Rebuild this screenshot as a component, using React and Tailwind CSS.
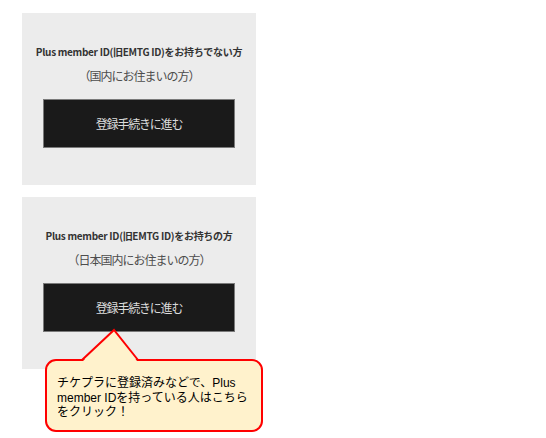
import React from 'react';

const jp = { fontFamily: '"Noto Sans CJK JP", "Noto Sans", sans-serif' };

const RegisterCard = ({ title, note }) => (
    <div className="w-[234px] h-[172px] bg-[#ececec] flex flex-col items-center pt-[31px]" style={jp}>
        <p className="text-[10px] leading-[16px] font-bold text-[#333] tracking-[-0.3px]">{title}</p>
        <p className="mt-[7px] text-[12px] leading-[18px] text-[#4d4d4d] tracking-[-1px]">{note}</p>
        <button className="mt-[14px] w-[192px] h-[49px] bg-[#1a1a1a] border border-[#7a7a7a] text-[#dcdcdc] text-[12px] tracking-[-1.2px]">
            登録手続きに進む
        </button>
    </div>
);

export default function App() {
    return (
        <div className="relative w-[546px] h-[438px] bg-white overflow-hidden">
            <div className="flex flex-col gap-[12px] pl-[22px] pt-[13px]">
                <RegisterCard title="Plus member ID(旧EMTG ID)をお持ちでない方" note="（国内にお住まいの方）" />
                <RegisterCard title="Plus member ID(旧EMTG ID)をお持ちの方" note="（日本国内にお住まいの方）" />
            </div>

            {/* callout */}
            <div
                className="absolute left-[45px] top-[359px] w-[218px] h-[73px] bg-[#fff2cc] border-2 border-[#ff0000] rounded-[11px] pl-[10px] pt-[15px] text-[12px] leading-[14.5px] text-black"
                style={{ fontFamily: '"Liberation Sans", "Noto Sans CJK JP", sans-serif' }}
            >
                チケプラに登録済みなどで、Plus<br />
                member IDを持っている人はこちら<br />
                をクリック！
            </div>
            <svg className="absolute left-0 top-0" width="546" height="438" viewBox="0 0 546 438">
                <polygon points="83,361 114,330 137,361" fill="#fff2cc" />
                <polyline points="82,360 114,330 138,360" fill="none" stroke="#ff0000" strokeWidth="2" strokeLinejoin="miter" />
            </svg>
        </div>
    );
}
